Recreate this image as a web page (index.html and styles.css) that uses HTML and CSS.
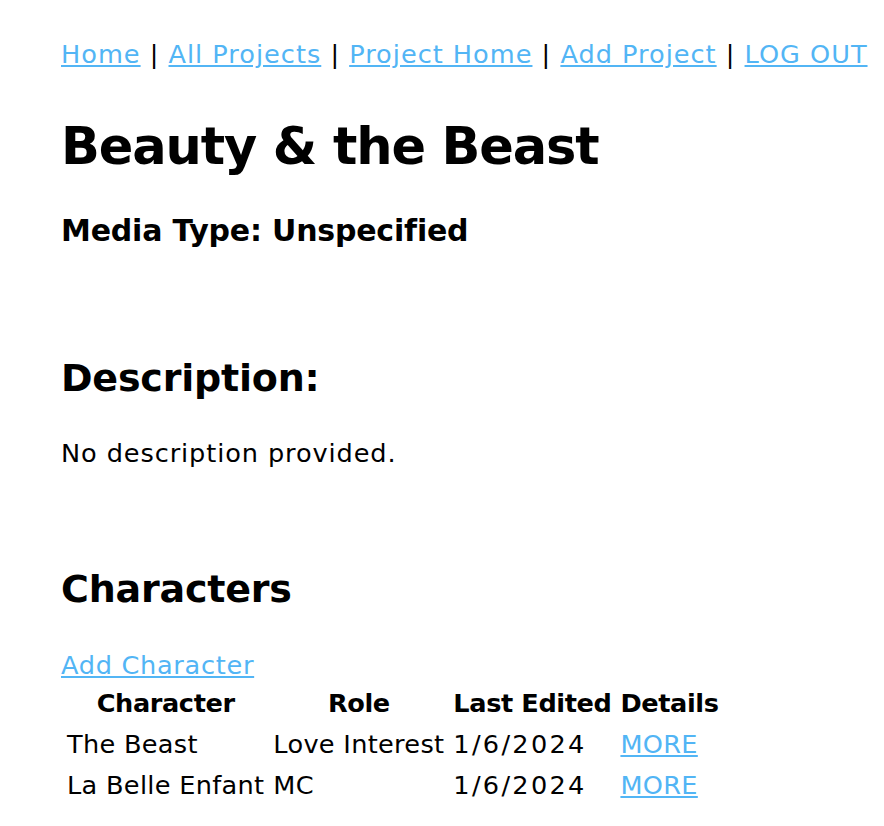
FILE: index.html
```html
<!DOCTYPE html>
<html>
<head>
<meta charset="utf-8">
<title>Beauty &amp; the Beast</title>
<link rel="stylesheet" href="styles.css">
</head>
<body>
<div class="page">
  <nav class="nav">
    <a href="#">Home</a> | <a href="#">All Projects</a> | <a href="#">Project Home</a> | <a href="#">Add Project</a> | <a href="#">LOG OUT</a>
  </nav>
  <h1 class="title">Beauty &amp; the Beast</h1>
  <h3 class="media">Media Type: Unspecified</h3>
  <h2 class="section desc-head">Description:</h2>
  <p class="desc">No description provided.</p>
  <h2 class="section chars-head">Characters</h2>
  <a class="add" href="#">Add Character</a>
  <table class="chars">
    <thead>
      <tr><th>Character</th><th>Role</th><th>Last Edited</th><th>Details</th></tr>
    </thead>
    <tbody>
      <tr><td>The Beast</td><td>Love Interest</td><td class="date">1/6/2024</td><td><a href="#">MORE</a></td></tr>
      <tr><td>La Belle Enfant</td><td>MC</td><td class="date">1/6/2024</td><td><a href="#">MORE</a></td></tr>
    </tbody>
  </table>
</div>
</body>
</html>
```
FILE: styles.css
```css
html, body {
  margin: 0;
  padding: 0;
  background: #fff;
}
body {
  font-family: "DejaVu Sans", "Liberation Sans", sans-serif;
  color: #000;
}
a {
  color: #52b5f5;
  text-decoration: underline;
}
.page {
  padding: 38px 0 40px 61px;
}
.nav {
  font-size: 25.6px;
  line-height: 32px;
  letter-spacing: 1px;
  white-space: nowrap;
}
.title {
  margin: 47px 0 0;
  font-size: 51px;
  line-height: 60px;
  font-weight: bold;
  letter-spacing: -1.1px;
}
.media {
  margin: 36px 0 0;
  font-size: 30px;
  line-height: 36px;
  font-weight: bold;
  letter-spacing: -0.2px;
}
.section {
  margin: 0;
  font-size: 38px;
  line-height: 44px;
  font-weight: bold;
  letter-spacing: -0.2px;
}
.desc-head {
  margin-top: 107px;
}
.desc {
  margin: 37px 0 0;
  font-size: 25.6px;
  line-height: 32px;
  letter-spacing: 0.9px;
}
.chars-head {
  margin-top: 98px;
}
.add {
  display: block;
  width: max-content;
  margin-top: 38px;
  font-size: 25.6px;
  line-height: 32px;
  letter-spacing: 0.7px;
}
.chars {
  border-spacing: 3px;
  font-size: 25.6px;
  line-height: 34px;
}
.chars th, .chars td {
  padding: 2px 3px;
  white-space: nowrap;
}
.chars th {
  font-weight: bold;
  text-align: center;
  letter-spacing: -0.4px;
}
.chars td {
  text-align: left;
  letter-spacing: 0.3px;
}
.chars td.date {
  letter-spacing: 2.3px;
}
```
